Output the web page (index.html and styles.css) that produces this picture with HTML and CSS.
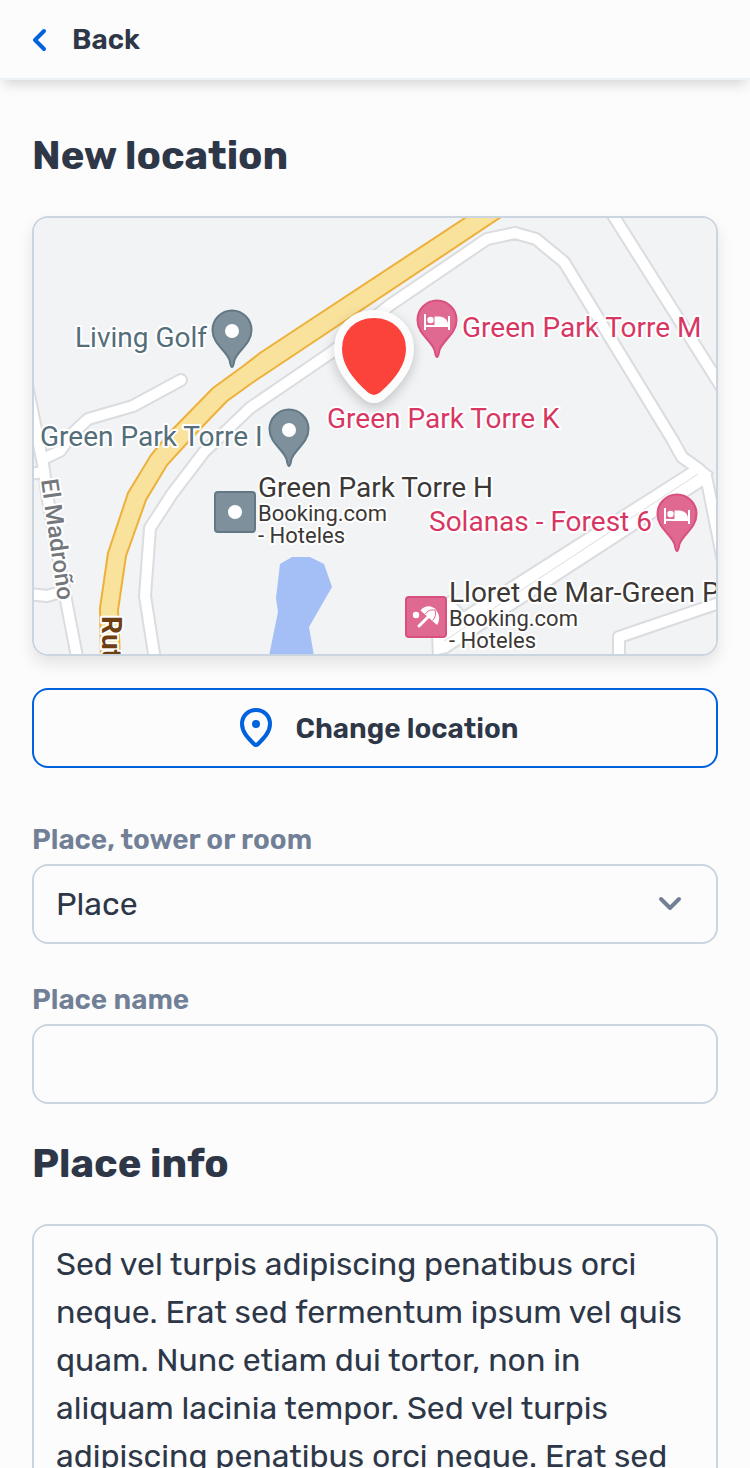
FILE: index.html
```html
<!DOCTYPE html>
<html lang="en">
<head>
<meta charset="utf-8">
<meta name="viewport" content="width=device-width, initial-scale=1">
<title>New location</title>
<link rel="stylesheet" href="styles.css">
</head>
<body>
<header class="topbar">
  <a class="back" href="#">
    <svg class="back-icon" viewBox="0 0 16 24" aria-hidden="true"><path d="M12 3 L3 12 L12 21"/></svg>
    <span>Back</span>
  </a>
</header>
<main class="page">
  <h1 class="title">New location</h1>
  <div class="map">
    <svg class="map-canvas" viewBox="34 218 682 436" preserveAspectRatio="xMidYMid slice" role="img" aria-label="Map of the area">
      <defs>
        <g id="pin"><path d="M0 36 C-1.500 36 -1.500 33 -2.500 29 C-6 19 -19.500 13 -19.500 -1 A19.500 19.500 0 0 1 19.500 -1 C19.500 13 6 19 2.500 29 C1.500 33 1.500 36 0 36 Z"/></g>
        <g id="bed"><path d="M-13 -7 h2 v11 h22 v-9 h2 v14 h-2 v-3 h-22 v3 h-2 Z"/><circle cx="-6.500" cy="-1" r="3.200"/><path d="M-2.500 4 V-4.500 H3 Q11 -3.500 11 4 Z"/></g>
      </defs>
      <rect class="land" x="34" y="218" width="682" height="436"/>
      <path class="lake" d="M292 557 H310 L324 564 L332 587 L309 627 L314 656 H269 L278 612 L276 598 L280 564 Z"/>
      <g class="road-edge">
        <path d="M24 370 L43 464 L48 500 L66 600 L78 662"/>
        <path d="M43 459 L60 451 L72 434 L88 419 L133 406 L181 380"/>
        <path d="M28 474 L44 472 M28 594 L47 596 L64 591"/>
        <path d="M155 660 L145 596 L150 528 L172 494 L204 452 L250 408 L332 352 L390 305 L487 239 L515 233 L536 239 L564 262 L672 439 L682 457 L700 470"/>
        <path d="M611 212 L722 388"/>
        <path d="M619 660 V637 L722 602"/>
        <path d="M706 476 L726 576"/>
      </g>
      <path class="road-area" d="M433 656 L431 610 L449 596 L464 611 L690 467 L698 462 L713 473 L705 485 L447 653 Z"/>
      <g class="road-fill">
        <path d="M24 370 L43 464 L48 500 L66 600 L78 662"/>
        <path d="M43 459 L60 451 L72 434 L88 419 L133 406 L181 380"/>
        <path d="M28 474 L44 472 M28 594 L47 596 L64 591"/>
        <path d="M155 660 L145 596 L150 528 L172 494 L204 452 L250 408 L332 352 L390 305 L487 239 L515 233 L536 239 L564 262 L672 439 L682 457 L700 470"/>
        <path d="M611 212 L722 388"/>
        <path d="M619 660 V637 L722 602"/>
        <path d="M706 476 L726 576"/>
      </g>
      <path class="road-line" d="M698 474 L444 641"/>
      <path class="highway" d="M474 212 L260 353 L242 367 L213 388 L171 431 L151 455 L128 493 L108 553 L100 608 L101 660 H120 L118 610 L126 556 L146 500 L167 465 L200 429 L227 401 L252 383 L510 211 Z"/>

      <text class="road-label" transform="translate(41 480) rotate(82)">El Madroño</text>
      <text class="route-label" transform="translate(102 616) rotate(90)">Ruta</text>

      <use class="pin-gray" href="#pin" x="232" y="331"/><circle class="mark" cx="232" cy="331" r="7"/>
      <use class="pin-gray" href="#pin" x="289" y="430"/><circle class="mark" cx="289" cy="430" r="7"/>
      <use class="pin-pink" href="#pin" x="437" y="321"/><use class="mark" href="#bed" x="437" y="321"/>
      <use class="pin-pink" href="#pin" x="677" y="515"/><use class="mark" href="#bed" x="677" y="515"/>
      <rect class="pin-gray" x="215" y="492" width="40" height="40" rx="3"/><circle class="mark" cx="235" cy="512" r="7"/>
      <rect class="pin-pink" x="406" y="597" width="40" height="40" rx="3"/>
      <g class="mark">
        <circle cx="416" cy="615" r="3.200"/>
        <path d="M420.500 610.500 C425 605 432 605 436 610 C440 615 440 620 437 625 Z"/>
      </g>
      <path class="umbrella-rib" d="M435 610 Q428 609 425.500 614 M435 610 Q437 616 432.500 620.500"/>
      <path class="umbrella-pole" d="M432 613 L419 626"/>

      <text class="place gray" x="75" y="347">Living Golf</text>
      <text class="place gray" x="40" y="446">Green Park Torre I</text>
      <text class="place pink" x="462" y="337">Green Park Torre M</text>
      <text class="place pink" x="327" y="428">Green Park Torre K</text>
      <text class="place pink" x="429" y="531">Solanas - Forest 6</text>
      <text class="place dark" x="258" y="497">Green Park Torre H</text>
      <text class="detail dark" x="258" y="521">Booking.com</text>
      <text class="detail dark" x="258" y="543">- Hoteles</text>
      <text class="place dark" x="449" y="602">Lloret de Mar-Green Park</text>
      <text class="detail dark" x="449" y="626">Booking.com</text>
      <text class="detail dark" x="449" y="648">- Hoteles</text>

      <path class="marker" d="M374 314 C353 314 338 329 338 349 C338 368 352 384 366 396 Q374 402 382 396 C396 384 410 368 410 349 C410 329 395 314 374 314 Z"/>
    </svg>
  </div>
  <button class="change" type="button">
    <svg class="change-icon" viewBox="0 0 32 40" aria-hidden="true"><path d="M16 2 C8 2 2 8 2 16 C2 24 8 30 14 36 Q16 38 18 36 C24 30 30 24 30 16 C30 8 24 2 16 2 Z"/><circle cx="16" cy="16" r="4"/></svg>
    <span>Change location</span>
  </button>
  <div class="field">
    <label class="label" for="kind">Place, tower or room</label>
    <div class="select-wrap">
      <select class="control" id="kind"><option>Place</option><option>Tower</option><option>Room</option></select>
      <svg class="chevron" viewBox="0 0 24 16" aria-hidden="true"><path d="M3 3 L12 12 L21 3"/></svg>
    </div>
  </div>
  <div class="field">
    <label class="label" for="name">Place name</label>
    <input class="control" id="name" type="text">
  </div>
  <h2 class="title info-title"><label for="info">Place info</label></h2>
  <textarea class="control info" id="info" rows="6">Sed vel turpis adipiscing penatibus orci neque. Erat sed fermentum ipsum vel quis quam. Nunc etiam dui tortor, non in aliquam lacinia tempor. Sed vel turpis adipiscing penatibus orci neque. Erat sed</textarea>
</main>
</body>
</html>
```
FILE: styles.css
```css
* { box-sizing: border-box; }

body {
  margin: 0;
  height: 100vh;
  display: flex;
  flex-direction: column;
  background: #fcfcfc;
  color: #2d3748;
  font-family: Rubik, Roboto, sans-serif;
}

.topbar {
  position: relative;
  z-index: 1;
  flex: none;
  padding: 20px 32px 18px;
  background: #fcfcfc;
  border-bottom: 2px solid #edf2f7;
  box-shadow: 0 8px 12px -4px rgba(0, 0, 0, 0.16);
}

.back {
  display: inline-flex;
  align-items: center;
  gap: 24px;
  color: inherit;
  font-size: 28px;
  font-weight: 600;
  line-height: 40px;
  text-decoration: none;
}

.back-icon {
  width: 16px;
  height: 24px;
  fill: none;
  stroke: #0062dd;
  stroke-width: 4;
  stroke-linecap: round;
  stroke-linejoin: round;
}

.page {
  flex: 1;
  min-height: 0;
  display: flex;
  flex-direction: column;
  padding: 48px 32px 0;
  overflow-y: auto;
  scrollbar-width: none;
}

.page > * { flex: none; }

.title {
  margin: 0 0 32px;
  font-size: 40px;
  font-weight: 700;
  line-height: 56px;
}

.map {
  border: 2px solid #cbd5e0;
  border-radius: 16px;
  overflow: hidden;
  box-shadow: 0 8px 16px rgba(0, 0, 0, 0.1);
}

.map-canvas {
  display: block;
  width: 100%;
  font-family: Roboto, sans-serif;
}

.land { fill: #f1f3f5; }
.lake { fill: #a4bff5; }
.road-edge, .road-fill { fill: none; stroke-linejoin: round; stroke-linecap: round; }
.road-edge { stroke: #dadce0; stroke-width: 14; }
.road-fill { stroke: #fff; stroke-width: 10; }
.road-area { fill: #fff; stroke: #dadce0; stroke-width: 2; }
.road-line { fill: none; stroke: #dadce0; stroke-width: 1; }
.highway { fill: #f9e29c; stroke: #edb03b; stroke-width: 2; }
.pin-gray { fill: #7d909c; stroke: #627884; stroke-width: 2; }
.pin-pink { fill: #e06991; stroke: #d94f7d; stroke-width: 2; }
.mark { fill: #fff; }
.umbrella-rib { fill: none; stroke: #e06991; stroke-width: 1; }
.umbrella-pole { fill: none; stroke: #fff; stroke-width: 3; stroke-linecap: round; }

.place, .detail, .road-label, .route-label {
  paint-order: stroke;
  stroke: #fff;
  stroke-width: 4px;
  stroke-linejoin: round;
}
.place { font-size: 28px; }
.detail { font-size: 22px; }
.gray { fill: #546e7a; }
.pink { fill: #d83763; }
.dark { fill: #3c3836; }
.road-label { font-size: 24px; font-weight: 500; fill: #74787c; }
.route-label { font-size: 28px; font-weight: 700; fill: #6d3f13; }
.marker {
  fill: #fb433b;
  stroke: #fcfcfc;
  stroke-width: 8;
  filter: drop-shadow(0 4px 6px rgba(0, 0, 0, 0.2));
}

.change {
  display: flex;
  align-items: center;
  justify-content: center;
  gap: 24px;
  height: 80px;
  margin: 32px 0 56px;
  padding: 0 0 0 8px;
  border: 2px solid #0062dd;
  border-radius: 16px;
  background: none;
  color: inherit;
  font-family: inherit;
  font-size: 28px;
  font-weight: 600;
}

.change-icon { width: 32px; height: 40px; }
.change-icon path { fill: none; stroke: #0062dd; stroke-width: 4; }
.change-icon circle { fill: #0062dd; }

.field {
  display: flex;
  flex-direction: column;
  margin-bottom: 40px;
}

.label {
  color: #718096;
  font-size: 28px;
  font-weight: 600;
  line-height: 32px;
  margin-bottom: 8px;
}

.control {
  width: 100%;
  height: 80px;
  margin: 0;
  padding: 0 22px;
  border: 2px solid #cbd5e0;
  border-radius: 16px;
  background: none;
  color: inherit;
  appearance: none;
  font-family: inherit;
  font-size: 32px;
}

.select-wrap { display: grid; align-items: center; }
.select-wrap > * { grid-area: 1 / 1; }

.chevron {
  justify-self: end;
  width: 24px;
  height: 16px;
  margin-right: 36px;
  fill: none;
  stroke: #718096;
  stroke-width: 4;
  stroke-linecap: round;
  stroke-linejoin: round;
  pointer-events: none;
}

.info-title { margin-top: -8px; }

.info {
  height: auto;
  padding: 14px 22px;
  line-height: 48px;
  resize: none;
}
```
